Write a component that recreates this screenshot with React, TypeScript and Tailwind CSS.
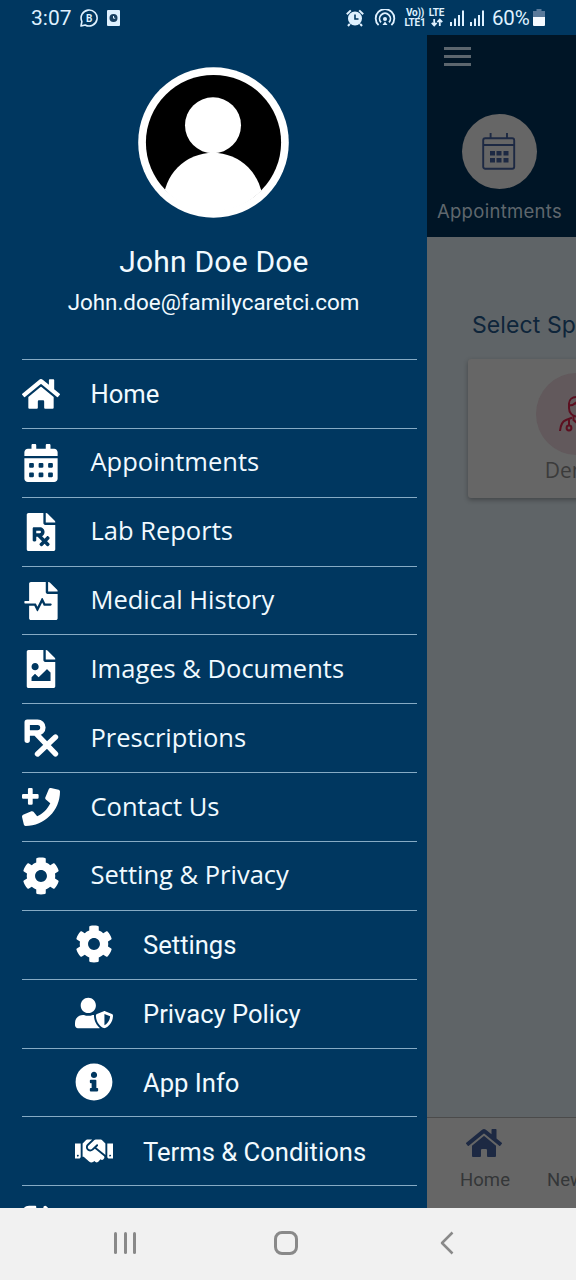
import React from "react";
import {
  FaHome,
  FaCalendarAlt,
  FaFilePrescription,
  FaFileMedicalAlt,
  FaFileImage,
  FaCog,
  FaUserShield,
  FaInfoCircle,
  FaHandshake,
  FaSignOutAlt,
} from "react-icons/fa";
import clsx from "clsx";

type MenuItem = {
  label: string;
  icon: React.ComponentType<{ className?: string }>;
};

const PhonePlus = ({ className }: { className?: string }) => (
  <svg viewBox="0 0 512 512" fill="currentColor" className={className}>
    <path d="M493.4 24.6l-104-24c-11.3-2.6-22.9 3.3-27.5 13.9l-48 112c-4.2 9.8-1.4 21.3 6.9 28l60.6 49.6c-36 76.7-98.9 140.5-177.2 177.2l-49.6-60.6c-6.8-8.3-18.2-11.1-28-6.9l-112 48C3.9 366.5-2 378.1.6 389.4l24 104C27.1 504.2 36.7 512 48 512c256.1 0 464-207.5 464-464 0-11.2-7.7-20.9-18.6-23.4z" />
    <path d="M96 0h32a16 16 0 0 1 16 16v64h64a16 16 0 0 1 16 16v32a16 16 0 0 1-16 16h-64v64a16 16 0 0 1-16 16H96a16 16 0 0 1-16-16v-64H16a16 16 0 0 1-16-16V96a16 16 0 0 1 16-16h64V16A16 16 0 0 1 96 0z" />
  </svg>
);

const RxIcon = ({ className }: { className?: string }) => (
  <svg viewBox="0 0 38 38" fill="none" stroke="currentColor" strokeWidth="5.4" className={className}>
    <path
      d="M5.200 21.200V3.200h10.300a5.400 5.400 0 0 1 0 10.800H5.200M13.500 14l20 20.800M33.500 18L15.500 35"
      strokeLinecap="round"
      strokeLinejoin="round"
    />
  </svg>
);

const menuItems: MenuItem[] = [
  { label: "Home", icon: FaHome },
  { label: "Appointments", icon: FaCalendarAlt },
  { label: "Lab Reports", icon: FaFilePrescription },
  { label: "Medical History", icon: FaFileMedicalAlt },
  { label: "Images & Documents", icon: FaFileImage },
  { label: "Prescriptions", icon: RxIcon },
  { label: "Contact Us", icon: PhonePlus },
  { label: "Setting & Privacy", icon: FaCog },
];

const subItems: MenuItem[] = [
  { label: "Settings", icon: FaCog },
  { label: "Privacy Policy", icon: FaUserShield },
  { label: "App Info", icon: FaInfoCircle },
  { label: "Terms & Conditions", icon: FaHandshake },
];

const SignalBars = () => (
  <svg viewBox="0 0 15 17" className="h-[17px] w-[15px]" fill="currentColor">
    <rect x="0" y="13" width="2" height="4" />
    <rect x="4" y="9.5" width="2" height="7.5" />
    <rect x="8" y="6" width="2" height="11" />
    <rect x="12" y="1.5" width="2" height="15.5" />
  </svg>
);

const StatusBar = () => (
  <div className="flex h-[35px] shrink-0 items-center bg-[#003760] pr-[31px] pl-[31px] font-['Roboto',sans-serif] text-[#dff1ff]">
    <span className="w-[42px] pt-px text-[21px] leading-none whitespace-nowrap">3:07</span>
    <svg viewBox="0 0 18 18" className="ml-[7px] h-[18px] w-[18px]" fill="none" stroke="currentColor" strokeWidth="1.6">
      <path d="M1 17l.9-4.5A8 8 0 1 1 5.2 16z" strokeLinejoin="round" />
      <text x="9.2" y="12.6" textAnchor="middle" fontSize="10" fontWeight="700" fill="currentColor" stroke="none">
        B
      </text>
    </svg>
    <svg viewBox="0 0 13 16" className="ml-[9px] h-[16px] w-[13px]">
      <rect width="13" height="16" rx="1" fill="currentColor" />
      <circle cx="6.5" cy="8" r="4" fill="#183f60" />
      <path d="M6.5 6v2.2H8.2" fill="none" stroke="currentColor" strokeWidth="1" />
    </svg>

    <div className="ml-auto flex items-center">
      <svg viewBox="0 0 18 18" className="h-[18px] w-[18px]" fill="currentColor">
        <circle cx="9" cy="9.5" r="7" />
        <path d="M.8 5.3L4.8 1.4M17.2 5.3l-4-3.9M3.8 14.8L2 17M14.2 14.8L16 17" stroke="currentColor" strokeWidth="2" />
        <path d="M9 5.5V10h3.5" fill="none" stroke="#003760" strokeWidth="1.6" />
      </svg>
      <svg viewBox="0 0 22 18" className="ml-[10px] h-[18px] w-[22px]" fill="none" stroke="currentColor" strokeWidth="1.8">
        <path d="M4.6 16.2A9.3 9.3 0 1 1 17.4 16.2" />
        <path d="M7 13.3A5.4 5.4 0 1 1 15 13.3" />
        <circle cx="11" cy="10" r="2" fill="currentColor" stroke="none" />
        <path d="M11 12.5l2.5 3.5h-5z" fill="currentColor" stroke="none" />
      </svg>
      <div className="ml-[8px] w-[22px] text-center text-[10px] leading-[10px] font-bold tracking-[-0.2px] whitespace-nowrap">
        <div>Vo))</div>
        <div>LTE1</div>
      </div>
      <div className="ml-[2px] w-[17px] text-center text-[10px] leading-[10px] font-bold tracking-[-0.2px]">
        <div>LTE</div>
        <svg viewBox="0 0 12 9" className="mx-auto h-[9px] w-[12px]" fill="none" stroke="currentColor" strokeWidth="1.8">
          <path d="M3.2 1v6M.8 4.8l2.4 2.7 2.4-2.7M8.8 8V2M6.4 4.2l2.4-2.7 2.4 2.7" />
        </svg>
      </div>
      <div className="ml-[5px] flex gap-[5px]">
        <SignalBars />
        <SignalBars />
      </div>
      <span className="ml-[7px] w-[39px] pt-px text-[20.5px] leading-none tracking-[-0.2px] whitespace-nowrap">60%</span>
      <svg viewBox="0 0 12 17" className="ml-[2px] h-[17px] w-[12px]">
        <path d="M3.5 0h5v2H12v6H0V2h3.5z" fill="#58799a" />
        <path d="M0 8h12v8a1 1 0 0 1-1 1H1a1 1 0 0 1-1-1z" fill="#f4faff" />
      </svg>
    </div>
  </div>
);

const Avatar = () => (
  <svg viewBox="0 0 151 151" className="h-[151px] w-[151px]">
    <defs>
      <clipPath id="avatar-clip">
        <circle cx="75.5" cy="75.5" r="68" />
      </clipPath>
    </defs>
    <circle cx="75.5" cy="75.5" r="75.3" fill="#fff" />
    <circle cx="75.5" cy="75.5" r="67.6" fill="#000" />
    <circle cx="75" cy="58.3" r="28" fill="#fff" />
    <circle cx="75" cy="135.5" r="49.7" fill="#fff" clipPath="url(#avatar-clip)" />
    <path d="M27 122h96c-10 14-28 22-48 22s-38-8-48-22z" fill="#fff" />
  </svg>
);

const Drawer = () => (
  <aside className="relative z-10 flex w-[427px] shrink-0 flex-col overflow-hidden bg-[#003760] text-[#f1faff]">
    <div className="flex h-[324px] shrink-0 flex-col items-center pt-[32px] font-['Roboto',sans-serif]">
      <Avatar />
      <div className="mt-[26px] ml-px text-[30px] leading-9 tracking-[0.2px]">John Doe Doe</div>
      <div className="mt-[8px] text-[22.4px] leading-7">John.doe@familycaretci.com</div>
    </div>
    <nav className="mr-[10px] ml-[22px]">
      {menuItems.map(({ label, icon: Icon }) => (
        <div key={label} className="flex h-[68.87px] items-center border-t border-[#86abc5]">
          <Icon className="h-[38px] w-[38px] text-white" />
          <span
            className={clsx(
              "ml-[30.5px] leading-8 whitespace-nowrap",
              label === "Home"
                ? "font-['Roboto',sans-serif] text-[25.6px]"
                : "pb-[3px] font-['Open_Sans',sans-serif] text-[25.5px]",
            )}
          >
            {label}
          </span>
        </div>
      ))}
      {subItems.map(({ label, icon: Icon }) => (
        <div key={label} className="flex h-[68.87px] items-center border-t border-[#86abc5] pb-px pl-[53px]">
          <Icon className="h-[38px] w-[38px] text-white" />
          <span className="ml-[30px] pt-[2px] font-['Roboto',sans-serif] text-[25.6px] leading-8 whitespace-nowrap">{label}</span>
        </div>
      ))}
      <div className="flex h-[68.87px] items-center border-t border-[#86abc5]">
        <FaSignOutAlt className="h-[38px] w-[38px] text-white" />
      </div>
    </nav>
  </aside>
);

const CalendarOutline = () => (
  <svg viewBox="0 0 34 38" className="h-[38px] w-[34px]" fill="none" stroke="#1d2943" strokeWidth="1.9">
    <rect x="1.2" y="6.2" width="31" height="30.5" rx="2" />
    <path d="M1.2 13h31M8.6 1v5M25 1v5" />
    <path d="M8 19h5v4.5H8zM14.5 19h5v4.5h-5zM21.5 19h5v4.5h-5zM8 26h5v4.5H8zM14.5 26h5v4.5h-5zM21.5 26h5v4.5h-5z" fill="#1d2943" stroke="none" />
  </svg>
);

const DoctorIcon = () => (
  <svg viewBox="0 0 36 38" className="h-[38px] w-[36px]" fill="none" stroke="#5c0f20" strokeWidth="2">
    <path d="M10 13V8.5C10 4.5 13.5 2 18 2s8 2.5 8 6.5V13c0 5-3.5 8.5-8 8.5S10 18 10 13z" />
    <path d="M10 10.5c3 0 5-1 6.5-2.5 2 2 5 2.5 9.5 2.5" />
    <path d="M14.5 21v4L18 28l3.5-3v-4" />
    <path d="M1 36c.5-6 2-9.5 6-11l6-2.3M35 36c-.5-6-2-9.5-6-11l-6-2.3" />
    <path d="M10 24.5v6" />
    <circle cx="10" cy="33" r="2.4" />
    <path d="M26 24.5v6l-3 4M26 30.5l3 4" />
  </svg>
);

const DimmedPage = () => (
  <main className="flex w-[149px] shrink-0 flex-col overflow-hidden bg-[#5f6467]">
    <header className="flex h-[202px] shrink-0 flex-col bg-[#001526] pt-[12px]">
      <div className="ml-[17px] flex w-[27px] flex-col gap-[5px]">
        <div className="h-[3px] bg-[#5c666e]" />
        <div className="h-[3px] bg-[#5c666e]" />
        <div className="h-[3px] bg-[#5c666e]" />
      </div>
      <div className="mt-[48px] ml-[-2px] flex w-[149px] flex-col items-center">
        <div className="flex h-[75px] w-[75px] items-center justify-center rounded-full bg-[#666] pr-[2px] pb-[2px]">
          <CalendarOutline />
        </div>
        <div className="mt-[10px] font-['Inter',sans-serif] text-[18.5px] leading-6 tracking-[0.3px] text-[#5f676d]">Appointments</div>
      </div>
    </header>

    <section className="flex-1">
      <h2 className="mt-[72px] ml-[45px] font-['Inter',sans-serif] text-[23px] leading-8 tracking-[0.1px] whitespace-nowrap text-[#0e253a]">
        Select Specialty
      </h2>
      <div className="mt-[18px] ml-[41px] flex h-[139px] w-[218px] flex-col items-center rounded-[3px] bg-[#666] pt-[14px] shadow-[0_2px_5px_rgba(0,0,0,0.3)]">
        <div className="flex h-[82px] w-[82px] items-center justify-center rounded-full bg-[#62595c]">
          <DoctorIcon />
        </div>
        <div className="font-['Open_Sans',sans-serif] text-[21px] leading-[30px] text-[#3b3b3b]">Dental</div>
      </div>
    </section>

    <footer className="flex h-[91px] shrink-0 border-t border-[#4b4b4b] bg-[#666] pt-[7px] font-['Roboto',sans-serif] text-[18.5px] text-[#343638]">
      <div className="flex w-[114px] shrink-0 flex-col items-center">
        <FaHome className="h-[36px] w-[36px] text-[#1d2943]" />
        <span className="mt-[7px] ml-[2px] leading-6 tracking-[0.1px]">Home</span>
      </div>
      <div className="pt-[43px] pl-[6px] leading-6">News</div>
    </footer>
  </main>
);

const SystemNav = () => (
  <div className="flex h-[72px] shrink-0 items-center bg-[#f1f1f1] pl-[114px] text-[#898989]">
    <div className="flex w-[22px] justify-between pb-[3px]">
      <span className="h-[22px] w-[3px] rounded-full bg-current" />
      <span className="h-[22px] w-[3px] rounded-full bg-current" />
      <span className="h-[22px] w-[3px] rounded-full bg-current" />
    </div>
    <div className="mb-[2px] ml-[138px] h-[24px] w-[24px] rounded-[8px] border-[3px] border-current" />
    <svg viewBox="0 0 14 24" className="mb-[3px] ml-[142px] h-[24px] w-[14px]" fill="none" stroke="currentColor" strokeWidth="2.5">
      <path d="M12.5 1.5L2 12l10.5 10.5" strokeLinejoin="round" />
    </svg>
  </div>
);

const App: React.FC = () => {
  return (
    <div className="flex h-[1280px] w-[576px] flex-col overflow-hidden">
      <StatusBar />
      <div className="flex h-[1173px] shrink-0 overflow-hidden">
        <Drawer />
        <DimmedPage />
      </div>
      <SystemNav />
    </div>
  );
};

export default App;
